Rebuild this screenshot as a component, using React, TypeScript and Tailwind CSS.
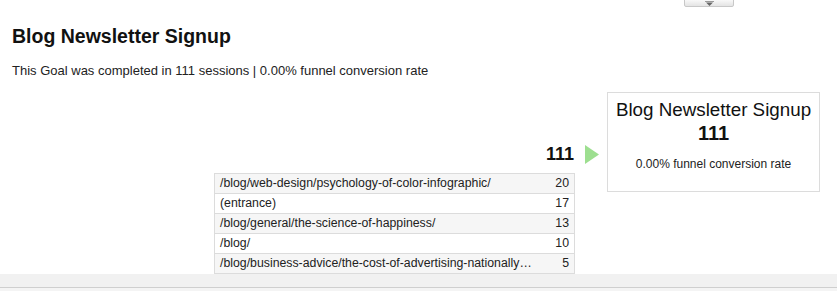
import React from "react";

const rows: { path: string; n: number }[] = [
  { path: "/blog/web-design/psychology-of-color-infographic/", n: 20 },
  { path: "(entrance)", n: 17 },
  { path: "/blog/general/the-science-of-happiness/", n: 13 },
  { path: "/blog/", n: 10 },
  { path: "/blog/business-advice/the-cost-of-advertising-nationally…", n: 5 },
];

export default function App() {
  return (
    <div
      className="w-[837px] h-[291px] bg-white text-[#222] overflow-hidden flex flex-col"
      style={{ fontFamily: '"Liberation Sans", Arial, sans-serif' }}
    >
      <div className="flex-1 flex flex-col">
        {/* collapse handle */}
        <div className="flex justify-end pr-[103px] h-[7px]">
          <div className="w-[50px] h-[8px] -mt-[1px] border border-[#c8c8c8] rounded-b-[2px] bg-gradient-to-b from-[#f8f8f8] to-[#e4e4e4] flex items-center justify-center">
            <svg width="9" height="5" viewBox="0 0 9 5">
              <rect x="0" y="0" width="9" height="1" fill="#9a9a9a" />
              <polygon points="1,1.5 8,1.5 4.5,5" fill="#666" />
            </svg>
          </div>
        </div>

        <h1 className="mt-[17px] ml-[12px] text-[19.5px] leading-[24px] font-bold text-[#111]">
          Blog Newsletter Signup
        </h1>
        <p className="mt-[15px] ml-[12px] text-[13px] leading-[16px] text-[#222]">
          This Goal was completed in 111 sessions | 0.00% funnel conversion rate
        </p>

        <div className="mt-[13px] flex justify-end items-start pr-[17px]">
          <div className="flex flex-col items-end pt-[52px]">
            <div className="flex items-center h-[20px]">
              <span className="text-[18px] leading-[20px] font-bold text-[#111]">111</span>
              <svg className="ml-[11px] mt-[1px]" width="14" height="19" viewBox="0 0 14 19">
                <polygon points="0,0 14,9.5 0,19" fill="#9ddf90" />
              </svg>
            </div>
            <div className="mt-[9px] mr-[24px] w-[361px] border-l border-r border-t border-[#dcdcdc]">
              {rows.map((r, i) => (
                <div
                  key={i}
                  className={`flex h-[20px] border-b border-[#dcdcdc] text-[12.3px] leading-[19px] ${
                    i % 2 === 0 ? "bg-[#f6f6f6]" : "bg-white"
                  }`}
                >
                  <div className="w-[325px] pl-[5px] truncate text-[#222]">{r.path}</div>
                  <div className="flex-1 pr-[5px] text-right text-[#222]">{r.n}</div>
                </div>
              ))}
            </div>
          </div>

          <div className="ml-[8px] w-[213px] h-[100px] border border-[#dcdcdc] flex flex-col items-center pt-[6px]">
            <div className="text-[18.8px] leading-[22px] text-[#111] whitespace-nowrap">
              Blog Newsletter Signup
            </div>
            <div className="text-[20px] leading-[24px] font-bold text-[#111]">111</div>
            <div className="mt-[11px] text-[12px] leading-[16px] text-[#222]">
              0.00% funnel conversion rate
            </div>
          </div>
        </div>
      </div>

      <div className="h-[13px] bg-[#f1f1f1] border-b border-[#cfcfcf] box-content" />
      <div className="h-[3px] bg-[#f4f4f4]" />
    </div>
  );
}
